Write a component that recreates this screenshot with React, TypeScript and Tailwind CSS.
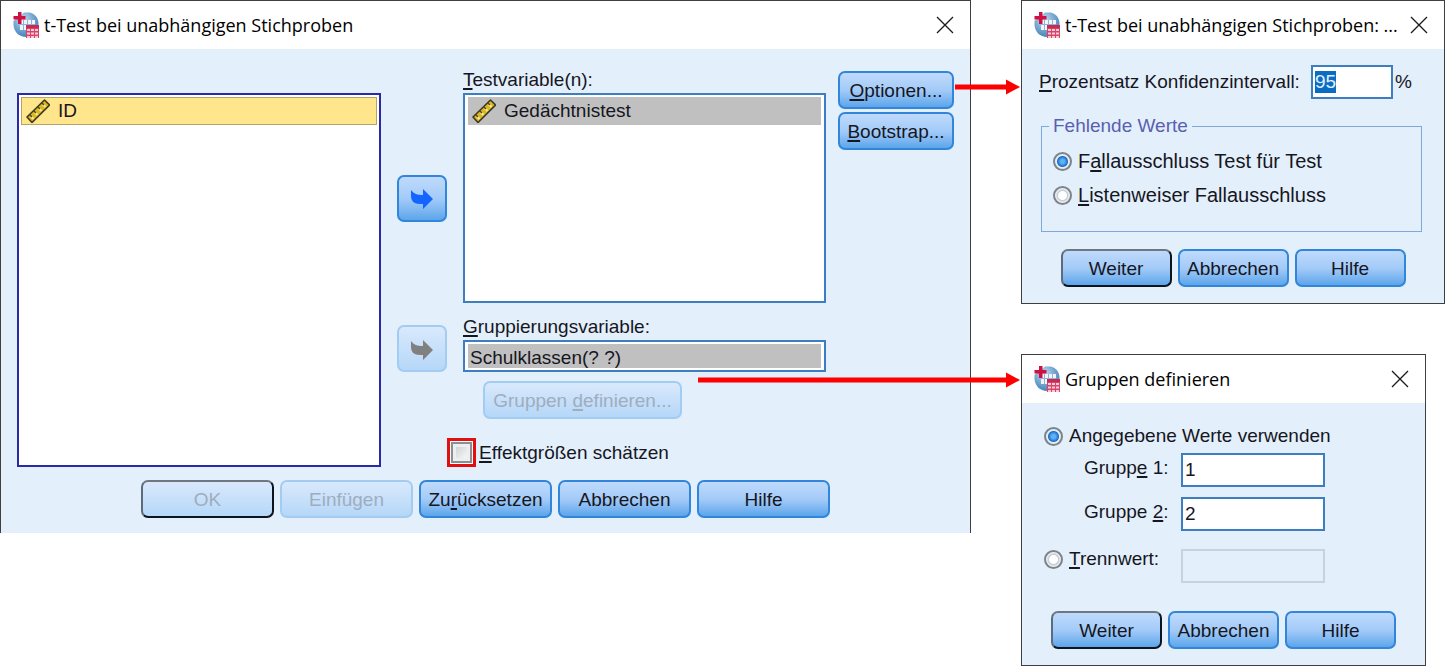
import { useEffect, useRef, useState, type ReactNode } from "react";
import clsx from "clsx";

// ── SPSS-Dialoge: t-Test bei unabhängigen Stichproben ─────────────────────

function AppIcon() {
  return (
    <svg width="26" height="26" viewBox="0 0 26 26" className="shrink-0" aria-hidden="true">
      <defs>
        <radialGradient id="globe" cx="0.4" cy="0.3" r="0.75">
          <stop offset="0" stopColor="#c4dcf0" />
          <stop offset="0.55" stopColor="#74a5cf" />
          <stop offset="1" stopColor="#3f7db6" />
        </radialGradient>
      </defs>
      <path d="M11 0.500 H17 C22 2 25.500 6 25.500 12 V25 H13 C6 25 1 20 0.500 13 V9 Z" fill="url(#globe)" />
      <path d="M7 8 H22 V13 H14 V18 H7 Z" fill="#eef6fc" />
      <path d="M7 12.500 H22 M10.500 8 V18 M14.500 8 V13 M18.500 8 V13" stroke="#8db4d8" strokeWidth="1" />
      <path d="M5 0 H8.500 V4 H12.500 V7.500 H8.500 V12 H5 V7.500 H0.500 V4 H5 Z" fill="#cf1040" />
      <rect x="13" y="13" width="13" height="13" fill="#d6446a" />
      <rect x="13" y="13" width="13" height="3" fill="#c92a52" />
      <path d="M14 18 H25 M14 21.500 H25 M14 25 H25" stroke="#f9ccd7" strokeWidth="2" />
      <path d="M17.500 17 V26 M21.500 17 V26" stroke="#d6446a" strokeWidth="1" />
    </svg>
  );
}

function RulerIcon() {
  return (
    <svg width="24" height="24" viewBox="0 0 24 24" className="shrink-0" aria-hidden="true">
      <path
        d="M1 18 L18.500 1 L23.500 6 L6 23.500 Z"
        fill="#dcb820"
        stroke="#3f3a24"
        strokeWidth="1.600"
        strokeLinejoin="round"
      />
      <path d="M5 17.500 L7.500 20 M9 13.500 L11.500 16 M13 9.500 L15.500 12 M17 5.500 L19.500 8" stroke="#f8ea9c" strokeWidth="2.200" />
      <path d="M3.500 15.500 L6 18 M7.500 11.500 L10 14 M11.500 7.500 L14 10 M15.500 3.500 L18 6" stroke="#4a4324" strokeWidth="1.300" />
    </svg>
  );
}

function CloseIcon() {
  return (
    <svg width="18" height="18" viewBox="0 0 18 18" aria-hidden="true">
      <path d="M1 1 L17 17 M17 1 L1 17" stroke="#1a1a1a" strokeWidth="1.300" />
    </svg>
  );
}

function Window({
  title,
  className,
  children,
}: {
  title: string;
  className?: string;
  children: ReactNode;
}) {
  return (
    <section className={clsx("relative border-[#3f3f42] bg-[#e3effb]", className)}>
      <header className="flex h-12 items-center gap-[5px] bg-white pr-4 pl-3">
        <AppIcon />
        <h2 className="min-w-0 flex-1 truncate font-['Open_Sans',sans-serif] text-[18px] leading-6 text-black">{title}</h2>
        <button type="button" aria-label="Schließen">
          <CloseIcon />
        </button>
      </header>
      {children}
    </section>
  );
}

function PushButton({
  children,
  className,
  disabled,
  primary,
}: {
  children: ReactNode;
  className?: string;
  disabled?: boolean;
  primary?: boolean;
}) {
  return (
    <button
      type="button"
      disabled={disabled}
      className={clsx(
        "flex h-[38px] items-center justify-center rounded-[7px] border-2 bg-linear-to-b pt-0.5 whitespace-nowrap",
        disabled
          ? "from-[#d9e9fc] to-[#b5d7f8] text-[#9fadbd]"
          : "from-[#bfdafc] via-[#a3cbf8] to-[#5ca5eb]",
        primary
          ? "border-t-[#6f7780] border-r-[#0c141e] border-b-[#0c141e] border-l-[#5c6c7c]"
          : disabled
            ? "border-[#a3ccf3]"
            : "border-[#3186d9]",
        className
      )}
    >
      <span>{children}</span>
    </button>
  );
}

function MoveButton({ label, disabled, className }: { label: string; disabled?: boolean; className?: string }) {
  return (
    <PushButton disabled={disabled} className={clsx("h-[47px] w-[50px] shrink-0", className)}>
      <svg
        width="22"
        height="20"
        viewBox="0 0 22 20"
        role="img"
        aria-label={label}
        className={disabled ? "text-[#808080]" : "text-[#1464ff]"}
      >
        <path d="M0 1 C3 5 6 6 12 6 V0 L22 10 L12 20 V15 H9 C3 15 0 12 0 7 Z" fill="currentColor" />
      </svg>
    </PushButton>
  );
}

function Radio({
  name,
  checked,
  onChange,
  children,
}: {
  name: string;
  checked: boolean;
  onChange: () => void;
  children: ReactNode;
}) {
  return (
    <label className="flex h-6 items-center gap-1.5 whitespace-nowrap">
      <input
        type="radio"
        name={name}
        checked={checked}
        onChange={onChange}
        className="size-[19px] shrink-0 appearance-none rounded-full border-2 border-[#7d8388] bg-[radial-gradient(circle,#ffffff_4px,#c3ccd4_5px,#eef3f7_7px)] checked:bg-[radial-gradient(circle,#5fb0f5_2px,#1c6fc9_5px,#e6eef6_6px)]"
      />
      <span>{children}</span>
    </label>
  );
}

function Arrow({ length, className }: { length: "short" | "long"; className: string }) {
  const w = length === "short" ? 66 : 323;
  return (
    <svg width={w} height="16" viewBox={`0 0 ${w} 16`} className={clsx("pointer-events-none absolute z-10", className)} aria-hidden="true">
      <path d={`M0 5.500 H${w - 15} V0.500 L${w - 1} 8 L${w - 15} 15.500 V10.500 H0 Z`} fill="#fe0000" />
    </svg>
  );
}

const FIELD = "h-[34px] min-w-0 border-2 border-[#3c7ebf] bg-white px-[2px] leading-6 outline-none";

function TTestWindow() {
  const [effect, setEffect] = useState(false);
  return (
    <Window title="t-Test bei unabhängigen Stichproben" className="min-w-0 flex-1 border-x border-t">
      <div className="flex px-4 pt-5">
        <ul
          role="listbox"
          aria-label="Variablen"
          className="mt-6 min-w-0 flex-1 border-2 border-[#2a2aa8] bg-white p-[2px]"
        >
          <li role="option" aria-selected="true" className="flex h-7 items-center gap-2 border border-[#b3a468] bg-[#ffe58c] px-1">
            <RulerIcon />
            ID
          </li>
        </ul>

        <div className="ml-4 min-w-0 flex-1 grow-[1.205]">
          <div className="flex items-center gap-4">
            <MoveButton label="Testvariable verschieben" className="mt-6" />
            <div className="min-w-0 flex-1">
              <div id="testvars" className="h-6 leading-[22px]">
                <u>T</u>estvariable(n):
              </div>
              <ul
                role="listbox"
                aria-labelledby="testvars"
                className="h-[210px] border-2 border-[#3c7ebf] bg-white p-[3px] pt-[2px]"
              >
                <li role="option" aria-selected="true" className="flex h-7 items-center gap-2 bg-[#c0c0c0] px-1">
                  <RulerIcon />
                  Gedächtnistest
                </li>
              </ul>
            </div>
          </div>

          <div className="mt-[13px] flex items-end gap-4">
            <MoveButton label="Gruppierungsvariable verschieben" disabled />
            <div className="min-w-0 flex-1">
              <label htmlFor="groupvar" className="block h-6 leading-[22px]">
                <u>G</u>ruppierungsvariable:
              </label>
              <div className="h-8 border-2 border-[#3c7ebf] bg-white px-[3px] py-[2px]">
                <input
                  id="groupvar"
                  readOnly
                  value="Schulklassen(? ?)"
                  className="block h-6 w-full bg-[#c0c0c0] px-[2px] pt-1 leading-5 outline-none"
                />
              </div>
            </div>
          </div>

          <PushButton disabled className="mt-[9px] ml-[86px] w-[199px]">
            Gruppen <u>d</u>efinieren...
          </PushButton>

          <label className="mt-[19px] ml-[50px] flex items-center gap-[3px]">
            <span className="border-[3px] border-[#e01010] bg-white p-[1px]">
              <input
                type="checkbox"
                checked={effect}
                onChange={(e) => setEffect(e.target.checked)}
                className="block size-[21px] appearance-none border-2 border-[#8b8f92] bg-linear-to-br from-[#c9cbcd] to-white shadow-[inset_0_0_0_3px_#eceeef] checked:bg-[#3186d9]"
              />
            </span>
            <span>
              <u>E</u>ffektgrößen schätzen
            </span>
          </label>
        </div>

        <div className="mt-[2px] ml-3 flex w-[116px] shrink-0 flex-col gap-[3px]">
          <PushButton>
            <u>O</u>ptionen...
          </PushButton>
          <PushButton>
            <u>B</u>ootstrap...
          </PushButton>
        </div>
      </div>

      <footer className="flex justify-center gap-1.5 pt-[13px] pb-[15px]">
        <PushButton disabled primary className="w-[133px]">
          OK
        </PushButton>
        <PushButton disabled className="w-[133px]">
          Einfügen
        </PushButton>
        <PushButton className="w-[133px]">
          Zu<u>r</u>ücksetzen
        </PushButton>
        <PushButton className="w-[133px]">Abbrechen</PushButton>
        <PushButton className="w-[133px]">Hilfe</PushButton>
      </footer>

      <Arrow length="short" className="top-[78px] -right-[51px]" />
      <Arrow length="long" className="top-[371px] -right-[51px]" />
    </Window>
  );
}

function DialogButtons() {
  return (
    <footer className="flex justify-center gap-1.5 pb-4">
      <PushButton primary className="w-[111px]">
        Weiter
      </PushButton>
      <PushButton className="w-[111px]">Abbrechen</PushButton>
      <PushButton className="w-[111px]">Hilfe</PushButton>
    </footer>
  );
}

function OptionsWindow() {
  const [level, setLevel] = useState("95");
  const [missing, setMissing] = useState<"test" | "list">("test");
  const levelRef = useRef<HTMLInputElement>(null);

  useEffect(() => {
    levelRef.current?.focus();
    levelRef.current?.select();
  }, []);

  return (
    <Window title="t-Test bei unabhängigen Stichproben: ..." className="border">
      <div className="flex items-center pt-4 pl-[17px]">
        <label htmlFor="level" className="w-[272px]">
          <u>P</u>rozentsatz Konfidenzintervall:
        </label>
        <input
          id="level"
          ref={levelRef}
          value={level}
          onChange={(e) => setLevel(e.target.value)}
          className={clsx(FIELD, "w-[82px] selection:bg-[#0a6cc2] selection:text-[#e3effb]")}
        />
        <span className="ml-[2px]">%</span>
      </div>

      <fieldset className="mt-[15px] mr-[22px] mb-[17px] ml-[19px] border border-[#7fa9da] pr-3 pb-6 pl-[11px]">
        <legend className="-ml-1 px-1 text-[#5a5fb0]">Fehlende Werte</legend>
        <div className="mt-[11px] flex flex-col gap-2.5 text-[20px]">
          <Radio name="missing" checked={missing === "test"} onChange={() => setMissing("test")}>
            F<u>a</u>llausschluss Test für Test
          </Radio>
          <Radio name="missing" checked={missing === "list"} onChange={() => setMissing("list")}>
            <u>L</u>istenweiser Fallausschluss
          </Radio>
        </div>
      </fieldset>

      <DialogButtons />
    </Window>
  );
}

function GroupsWindow() {
  const [mode, setMode] = useState<"values" | "cut">("values");
  const [group1, setGroup1] = useState("1");
  const [group2, setGroup2] = useState("2");

  return (
    <Window title="Gruppen definieren" className="w-[405px] border">
      <div className="grid grid-cols-[137px_144px] pt-[21px] pb-7 pl-[22px]">
        <div className="col-span-2 mb-[5px]">
          <Radio name="mode" checked={mode === "values"} onChange={() => setMode("values")}>
            Angegebene Werte verwenden
          </Radio>
        </div>
        <label htmlFor="g1" className="mt-[3px] ml-10">
          Grupp<u>e</u> 1:
        </label>
        <input id="g1" value={group1} onChange={(e) => setGroup1(e.target.value)} className={FIELD} />
        <label htmlFor="g2" className="mt-[13px] ml-10">
          Gruppe <u>2</u>:
        </label>
        <input id="g2" value={group2} onChange={(e) => setGroup2(e.target.value)} className={clsx(FIELD, "mt-2.5")} />
        <div className="mt-4">
          <Radio name="mode" checked={mode === "cut"} onChange={() => setMode("cut")}>
            <u>T</u>rennwert:
          </Radio>
        </div>
        <input
          aria-label="Trennwert"
          disabled={mode !== "cut"}
          className="mt-[18px] h-[34px] min-w-0 border-2 border-[#c9d1da] bg-transparent px-[2px]"
        />
      </div>

      <DialogButtons />
    </Window>
  );
}

export default function App() {
  return (
    <main className="flex items-start gap-[50px] bg-white font-['Liberation_Sans',Arial,sans-serif] text-[19px] leading-6 text-[#16161e] [&_u]:decoration-2 [&_u]:underline-offset-2">
      <TTestWindow />
      <div className="flex w-[424px] shrink-0 flex-col gap-[50px]">
        <OptionsWindow />
        <GroupsWindow />
      </div>
    </main>
  );
}
